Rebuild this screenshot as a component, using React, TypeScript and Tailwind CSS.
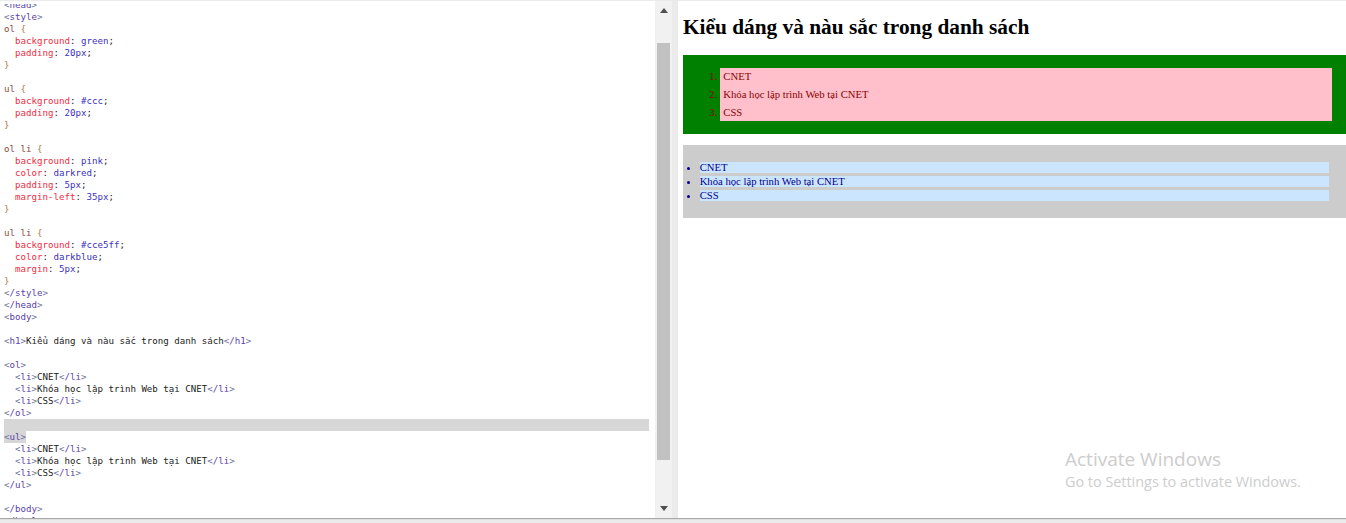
const KEY = 'text-[#ee2d44]';
const VAL = 'text-[#3a30c0]';
const SEL = 'text-[#8a4a3a]';
const TAG = 'text-[#5a3fa8]';
const BR = 'text-[#6f74a0]';
const TXT = 'text-[#222222]';

function Tag({ name }: { name: string }) {
  return (
    <>
      <span className={BR}>&lt;</span>
      <span className={TAG}>{name}</span>
      <span className={BR}>&gt;</span>
    </>
  );
}

function Rule({ sel }: { sel: string }) {
  return (
    <div className="h-3">
      <span className={SEL}>{sel}</span> <span className="text-[#b07a40]">{'{'}</span>
    </div>
  );
}

function Prop({ k, v }: { k: string; v: string }) {
  return (
    <div className="h-3">
      {'  '}
      <span className={KEY}>{k}</span>
      <span className={TXT}>:</span> <span className={VAL}>{v}</span>
      <span className={TXT}>;</span>
    </div>
  );
}

function Close() {
  return <div className="h-3 text-[#b07a40]">{'}'}</div>;
}

function Line({ children }: { children?: React.ReactNode }) {
  return <div className="h-3">{children}</div>;
}

function Li({ text }: { text: string }) {
  return (
    <Line>
      {'  '}
      <Tag name="li" />
      <span className={TXT}>{text}</span>
      <Tag name="/li" />
    </Line>
  );
}

function CodePane() {
  return (
    <div className="flex-1 min-w-0 bg-white pt-[3px]">
      <div className="h-full overflow-hidden">
        <pre className="-mt-[5px] pl-[4px] font-['DejaVu_Sans_Mono','Liberation_Mono',monospace] text-[9.15px] leading-[12px]">
          <Line><Tag name="head" /></Line>
          <Line><Tag name="style" /></Line>
          <Rule sel="ol" />
          <Prop k="background" v="green" />
          <Prop k="padding" v="20px" />
          <Close />
          <Line />
          <Rule sel="ul" />
          <Prop k="background" v="#ccc" />
          <Prop k="padding" v="20px" />
          <Close />
          <Line />
          <Rule sel="ol li" />
          <Prop k="background" v="pink" />
          <Prop k="color" v="darkred" />
          <Prop k="padding" v="5px" />
          <Prop k="margin-left" v="35px" />
          <Close />
          <Line />
          <Rule sel="ul li" />
          <Prop k="background" v="#cce5ff" />
          <Prop k="color" v="darkblue" />
          <Prop k="margin" v="5px" />
          <Close />
          <Line><Tag name="/style" /></Line>
          <Line><Tag name="/head" /></Line>
          <Line><Tag name="body" /></Line>
          <Line />
          <Line>
            <Tag name="h1" />
            <span className={TXT}>Kiểu dáng và nàu sắc trong danh sách</span>
            <Tag name="/h1" />
          </Line>
          <Line />
          <Line><Tag name="ol" /></Line>
          <Li text="CNET" />
          <Li text="Khóa học lập trình Web tại CNET" />
          <Li text="CSS" />
          <Line><Tag name="/ol" /></Line>
          <div className="h-3 bg-[#d7d7d7] mr-[6px]" />
          <div className="h-3 w-[22px] bg-[#d7d7d7]">
            <Tag name="ul" />
          </div>
          <Li text="CNET" />
          <Li text="Khóa học lập trình Web tại CNET" />
          <Li text="CSS" />
          <Line><Tag name="/ul" /></Line>
          <Line />
          <Line><Tag name="/body" /></Line>
          <Line><Tag name="/html" /></Line>
        </pre>
      </div>
    </div>
  );
}

function Scrollbar() {
  return (
    <div className="w-[17px] shrink-0 bg-[#f1f1f1] flex flex-col items-center">
      <div className="h-[42px] w-full flex justify-center pt-[7px]">
        <div className="w-0 h-0 border-x-[4px] border-x-transparent border-b-[5px] border-b-[#505050]" />
      </div>
      <div className="h-[417px] w-[13px] bg-[#c1c1c1]" />
      <div className="flex-1 w-full flex justify-center items-end pb-[7px]">
        <div className="w-0 h-0 border-x-[4px] border-x-transparent border-t-[5px] border-t-[#505050]" />
      </div>
    </div>
  );
}

function Preview() {
  return (
    <div className="relative h-full overflow-hidden bg-white pl-[5px] pt-[14px] font-['Liberation_Serif',serif] text-[10.67px] text-black">
      <h1 className="text-[21.33px] font-bold leading-[24px] mb-[16px]">Kiểu dáng và nàu sắc trong danh sách</h1>
      <ol className="list-decimal bg-[#008000] py-[13px] pl-[37px] pr-[14px] mb-[11px]">
        {['CNET', 'Khóa học lập trình Web tại CNET', 'CSS'].map((t) => (
          <li key={t} className="bg-[#ffc0cb] text-[#8b0000] px-[3.33px] pt-[3.33px] leading-[11.33px] h-[17.67px]">
            {t}
          </li>
        ))}
      </ol>
      <ul className="list-disc bg-[#cccccc] p-[13.33px]">
        {['CNET', 'Khóa học lập trình Web tại CNET', 'CSS'].map((t) => (
          <li key={t} className="bg-[#cce5ff] text-[#00008b] m-[3.33px] h-[11px] leading-[10px]">
            {t}
          </li>
        ))}
      </ul>
      <div className="absolute left-[387px] top-[445px] font-['Open_Sans',sans-serif] text-[#cdcdcd]">
        <div className="text-[19px] leading-[26px]">Activate Windows</div>
        <div className="text-[14.4px] leading-[19px]">Go to Settings to activate Windows.</div>
      </div>
    </div>
  );
}

export default function App() {
  return (
    <div className="h-[523px] w-[1346px] overflow-hidden bg-[#ebebeb] pt-[1px]">
      <div className="h-[517px] flex gap-[6px] shadow-[0_1px_1px_#a8a8a8]">
        <div className="w-[672px] shrink-0 flex">
          <CodePane />
          <Scrollbar />
        </div>
        <div className="flex-1 min-w-0">
          <Preview />
        </div>
      </div>
    </div>
  );
}
